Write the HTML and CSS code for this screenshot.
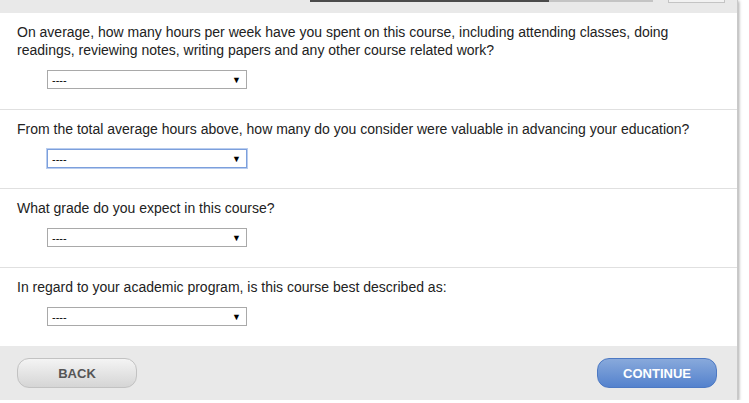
FILE: index.html
```html
<!DOCTYPE html>
<html>
<head>
<meta charset="utf-8">
<link rel="stylesheet" href="styles.css">
</head>
<body>
<div class="page">
  <div class="topband">
    <div class="progress"><div class="progress-fill" style="width:239px"></div></div>
    <div class="topbox"></div>
  </div>
  <div class="content">
    <div class="question">
      <p class="qtext">On average, how many hours per week have you spent on this course, including attending classes, doing readings, reviewing notes, writing papers and any other course related work?</p>
      <div class="select"><span>----</span><span class="arrow">&#9660;</span></div>
    </div>
    <div class="question">
      <p class="qtext">From the total average hours above, how many do you consider were valuable in advancing your education?</p>
      <div class="select focused"><span>----</span><span class="arrow">&#9660;</span></div>
    </div>
    <div class="question">
      <p class="qtext">What grade do you expect in this course?</p>
      <div class="select"><span>----</span><span class="arrow">&#9660;</span></div>
    </div>
    <div class="question last">
      <p class="qtext">In regard to your academic program, is this course best described as:</p>
      <div class="select"><span>----</span><span class="arrow">&#9660;</span></div>
    </div>
  </div>
  <div class="footer">
    <button class="btn btn-back">BACK</button>
    <button class="btn btn-continue">CONTINUE</button>
  </div>
</div>
</body>
</html>
```
FILE: styles.css
```css
html, body {
  margin: 0;
  padding: 0;
  background: #ffffff;
}
body {
  font-family: "Liberation Sans", Arial, sans-serif;
  color: #222;
}
.page {
  width: 737px;
  border-right: 1px solid #c9c9c9;
  box-shadow: 1px 1px 3px rgba(0,0,0,0.35);
}
.topband {
  height: 13px;
  background: #e9e9e9;
  display: flex;
  align-items: flex-start;
}
.progress {
  margin-left: 310px;
  width: 343px;
  height: 2px;
  background: #c4c4c4;
  display: flex;
}
.progress-fill {
  height: 2px;
  background: #4b4b4b;
}
.topbox {
  margin-left: 15px;
  width: 55px;
  height: 2px;
  border: 1px solid #c4c4c4;
  border-top: none;
  background: #f2f2f2;
}
.content {
  background: #fff;
}
.question {
  padding: 10px 0 20px 17px;
  border-bottom: 1px solid #e0e0e0;
}
.question.last {
  border-bottom: none;
}
.qtext {
  margin: 0;
  font-size: 14px;
  line-height: 18px;
  padding-right: 40px;
}
.select {
  margin: 11px 0 0 30px;
  height: 17px;
  border: 1px solid #a9a9a9;
  display: flex;
  align-items: center;
  justify-content: space-between;
  padding: 0 4px 0 4px;
  box-sizing: content-box;
  width: 190px;
  font-size: 11px;
  color: #000;
  background: #fff;
}
.select .arrow {
  font-size: 9px;
  margin-right: 1px;
}
.select.focused {
  border-color: #7c9fdc;
  box-shadow: 0 0 0 1px #b9cdef;
}
.footer {
  background: #e9e9e9;
  height: 54px;
  display: flex;
  justify-content: space-between;
  align-items: flex-start;
  padding: 12px 20px 0 17px;
  box-sizing: border-box;
}
.btn {
  width: 120px;
  height: 30px;
  border-radius: 12px;
  font-family: "Liberation Sans", Arial, sans-serif;
  font-size: 13px;
  font-weight: bold;
  padding: 0;
  cursor: pointer;
}
.btn-back {
  background: linear-gradient(#f4f4f4, #d5d5d5);
  border: 1px solid #c2c2c2;
  color: #555;
}
.btn-continue {
  background: linear-gradient(#88a9db, #5482cd);
  border: 1px solid #4d79c3;
  color: #fff;
}
```
